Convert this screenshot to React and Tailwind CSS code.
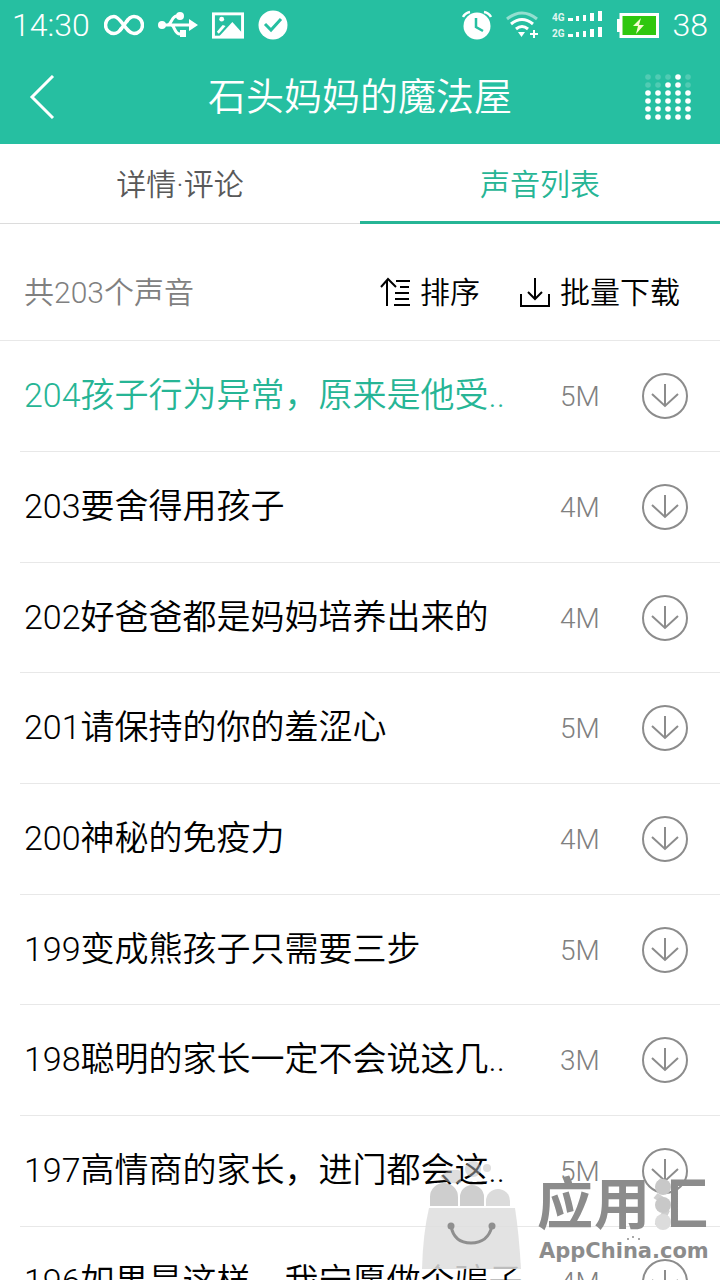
import React, { useState } from 'react';

const sounds = [
  { id: 204, title: '204孩子行为异常，原来是他受..', size: '5M' },
  { id: 203, title: '203要舍得用孩子', size: '4M' },
  { id: 202, title: '202好爸爸都是妈妈培养出来的', size: '4M' },
  { id: 201, title: '201请保持的你的羞涩心', size: '5M' },
  { id: 200, title: '200神秘的免疫力', size: '4M' },
  { id: 199, title: '199变成熊孩子只需要三步', size: '5M' },
  { id: 198, title: '198聪明的家长一定不会说这几..', size: '3M' },
  { id: 197, title: '197高情商的家长，进门都会这..', size: '5M' },
  { id: 196, title: '196如果是这样，我宁愿做个骗子', size: '4M' },
];

// lit dots per column of the "now playing" icon, counted from the bottom
const playingLevels = [4, 4, 5, 6, 4];

const InfinityIcon = () => (
  <svg width="40" height="22" viewBox="0 0 40 22" fill="none" stroke="currentColor" strokeWidth="3.500">
    <path d="M17.500 14C15.500 17.500 13 19.500 10 19.500a8.500 8.500 0 0 1 0-17C17 2.500 22 19.500 30 19.500a8.500 8.500 0 0 0 0-17C27 2.500 24.500 4.500 22.500 8" />
    <path d="M16 16.500L24 5.500" />
  </svg>
);

const UsbIcon = () => (
  <svg width="40" height="26" viewBox="0 0 40 26" fill="none" stroke="currentColor" strokeWidth="3">
    <path d="M4 13h29M9 13c5 0 4-9 10-9h2M13 13c4 0 3 9 9 9h3" />
    <circle cx="4" cy="13" r="4" fill="currentColor" stroke="none" />
    <circle cx="22" cy="4" r="4" fill="currentColor" stroke="none" />
    <path d="M22 18h6v7h-6zM31 7l9 6-9 6z" fill="currentColor" stroke="none" />
  </svg>
);

const PictureIcon = () => (
  <svg width="32" height="27" viewBox="0 0 33 27">
    <rect x="1.500" y="1.500" width="30" height="24" fill="none" stroke="currentColor" strokeWidth="3" />
    <circle cx="10" cy="7" r="2.500" fill="currentColor" />
    <path d="M5 20l6-7 3 1-7 8z" fill="currentColor" />
    <path d="M7 25L21 10l10 11v4z" fill="currentColor" />
  </svg>
);

const CheckBadgeIcon = () => (
  <svg width="30" height="30" viewBox="0 0 30 30">
    <circle cx="15" cy="15" r="14.500" fill="currentColor" />
    <path d="M7 14l6 6 10-11" fill="none" stroke="#26bfa1" strokeWidth="3" />
  </svg>
);

const AlarmIcon = () => (
  <svg width="30" height="30" viewBox="0 0 30 30" fill="none" stroke="currentColor">
    <circle cx="15" cy="16" r="13.500" fill="currentColor" stroke="none" />
    <path d="M1 7q2-4 7-5M29 7q-2-4-7-5" strokeWidth="2.500" />
    <path d="M14 8v9l7 4" stroke="#26bfa1" strokeWidth="2.500" />
  </svg>
);

const WifiIcon = () => (
  <svg width="32" height="28" viewBox="0 0 32 28" fill="none" stroke="currentColor" strokeWidth="3">
    <path d="M1 8Q16-4 31 8" opacity="0.5" />
    <path d="M5 13Q16 4 27 13" />
    <path d="M10 18Q16 13 22 18" />
    <path d="M12 21h7l-3.500 5z" fill="currentColor" stroke="none" />
    <path d="M28 19v8M24 23h8" strokeWidth="2" />
  </svg>
);

const SignalIcon = () => (
  <svg width="51" height="28" viewBox="0 0 51 28" fill="currentColor">
    {[0, 16].map((top) => (
      <g key={top}>
        <text x="0" y={top + 10} fontSize="10" fontWeight="700" opacity="0.85">{top === 0 ? '4G' : '2G'}</text>
        <rect x="16" y={top + 7} width="5" height="3" />
        <rect x="24" y={top + 5} width="3" height="5" />
        <rect x="31" y={top + 4} width="3" height="6" />
        <rect x="38" y={top + 2} width="4" height="8" />
        <rect x="46" y={top} width="4" height="10" />
      </g>
    ))}
  </svg>
);

const BatteryIcon = () => (
  <svg width="42" height="25" viewBox="0 0 42 25">
    <rect x="0" y="6" width="4" height="13" fill="currentColor" />
    <rect x="4" y="1.500" width="36.500" height="22" fill="#2fc70f" stroke="currentColor" strokeWidth="3" />
    <path d="M24 5l-8 8h5l-2 8 8-9h-5z" fill="#f5fbd0" />
  </svg>
);

const PlayingIcon = () => (
  <svg width="48" height="48" viewBox="0 0 48 48" fill="currentColor">
    {playingLevels.map((level, col) =>
      [0, 1, 2, 3, 4, 5].map((row) => (
        <circle
          key={`${col}-${row}`}
          cx={4 + col * 10}
          cy={44 - row * 8}
          r="2.800"
          opacity={row < level ? 1 : 0.2}
        />
      ))
    )}
  </svg>
);

const SortIcon = () => (
  <svg width="30" height="30" viewBox="0 0 30 30" fill="none" stroke="currentColor" strokeWidth="2">
    <path d="M1 10L8 2l8 8M7 3v26M16 4h14M20 10h9M15 16h14M15 22h14M14 28h16" />
  </svg>
);

const BatchDownloadIcon = () => (
  <svg width="30" height="30" viewBox="0 0 30 30" fill="none" stroke="currentColor" strokeWidth="2">
    <path d="M15 1v21M8 15l7 7 7-7M1 17v12h28V17" />
  </svg>
);

const DownloadIcon = () => (
  <svg width="46" height="46" viewBox="0 0 46 46" fill="none" stroke="currentColor" strokeWidth="2">
    <circle cx="23" cy="23" r="22" />
    <path d="M23 11v22M10 21l13 12 13-12" />
  </svg>
);

const StoreMark = () => (
  <svg
    role="img"
    aria-label="应用汇 AppChina.com"
    className="pointer-events-none absolute right-0 bottom-0"
    width="300"
    height="120"
    viewBox="0 0 300 120"
  >
    <defs>
      <linearGradient id="hui">
        <stop offset="0.32" stopColor="#cfcfcf" />
        <stop offset="0.32" stopColor="#8c8c8c" />
      </linearGradient>
    </defs>
    <g fill="#bdbdbd" fillOpacity="0.75">
      <path d="M10 46v-9a14 14 0 0 1 28 0v9zM40 46v-9a12 12 0 0 1 24 0v9z" />
      <path d="M66 46v-5a12 12 0 0 1 24 0v5z" fillOpacity="0.55" />
      <path d="M20 17q10-10 21-6v12q-12 2-21-6z" fillOpacity="0.5" />
      <circle cx="53" cy="9" r="8" fillOpacity="0.5" />
      <circle cx="67" cy="8" r="4" fillOpacity="0.5" />
    </g>
    <path d="M9 48h86q4 26 6 61H2q1-36 7-61z" fill="#dedede" fillOpacity="0.85" />
    <path d="M31 66q3 17 20 17t21-17" fill="none" stroke="#8f8f8f" strokeWidth="3" />
    <circle cx="31" cy="66" r="3.500" fill="#8f8f8f" />
    <circle cx="72" cy="66" r="3.500" fill="#8f8f8f" />
    <g fill="#8c8c8c" fontSize="56" fontWeight="700">
      <text x="117" y="64">应</text>
      <text x="174" y="64">用</text>
      <text x="232" y="64" fill="url(#hui)">汇</text>
      <text x="119" y="98" fontSize="21" fontFamily="'DejaVu Sans', sans-serif">AppChina.com</text>
    </g>
    <g fill="#c8c8c8">
      <circle cx="243" cy="27" r="8" />
      <circle cx="243" cy="45" r="8" />
      <circle cx="243" cy="62" r="8" fill="#dcdcdc" />
    </g>
    <g fill="#8c8c8c">
      <circle cx="208" cy="79" r="1" />
      <circle cx="213" cy="77" r="1" />
      <circle cx="219" cy="79" r="1" />
    </g>
  </svg>
);

const StatusBar = () => (
  <div className="flex h-[50px] items-center justify-between px-3 text-[32px] leading-none">
    <div className="flex items-center gap-3.5">
      <span>14:30</span>
      <InfinityIcon />
      <UsbIcon />
      <PictureIcon />
      <CheckBadgeIcon />
    </div>
    <div className="flex items-center gap-3.5">
      <AlarmIcon />
      <WifiIcon />
      <SignalIcon />
      <BatteryIcon />
      <span>38</span>
    </div>
  </div>
);

const SoundRow = ({ sound, active, onSelect }) => (
  <li className="ml-5 flex h-[111px] shrink-0 items-center border-b border-[#e8e8e8] pr-8 pl-1 nth-[3n]:h-[110px]">
    <button
      className={`min-w-0 flex-1 truncate pb-0.5 text-left text-[34px] leading-[48px] ${active ? 'text-[#26b595]' : 'text-black'}`}
      onClick={() => onSelect(sound.id)}
    >
      {sound.title}
    </button>
    <span className="w-[82px] shrink-0 pt-0.5 text-[28px] text-[#808080]">{sound.size}</span>
    <button className="text-[#8c8c8c]" aria-label={`下载 ${sound.title}`}>
      <DownloadIcon />
    </button>
  </li>
);

const App = () => {
  const [tab, setTab] = useState('list');
  const [current, setCurrent] = useState(204);

  const tabClass = (name) =>
    tab === name
      ? 'border-b-3 border-[#26b595] text-[#26b595]'
      : 'border-b border-[#dcdcdc] text-[#595959]';

  return (
    <div className="relative flex h-screen flex-col overflow-hidden bg-white font-[Roboto,'Noto_Sans_CJK_SC',sans-serif] font-[350]">
      <header className="shrink-0 bg-[#26bfa1] text-white">
        <StatusBar />
        <div className="flex h-[94px] items-center justify-between px-7">
          <button className="w-12" aria-label="返回">
            <svg width="28" height="44" viewBox="0 0 28 44" fill="none" stroke="currentColor" strokeWidth="3">
              <path d="M25 1L4 22l21 21" />
            </svg>
          </button>
          <h1 className="text-[38px]">石头妈妈的魔法屋</h1>
          <button aria-label="正在播放">
            <PlayingIcon />
          </button>
        </div>
      </header>

      <nav className="grid h-20 shrink-0 grid-cols-2 text-[30px]">
        <button className={`pt-0.5 ${tabClass('detail')}`} onClick={() => setTab('detail')}>详情·评论</button>
        <button className={`pt-1 ${tabClass('list')}`} onClick={() => setTab('list')}>声音列表</button>
      </nav>

      <div className="flex h-[117px] shrink-0 items-center border-b border-[#e8e8e8] pt-5 pr-10 pl-6 text-[30px]">
        <span className="flex-1 text-[#808080]">共203个声音</span>
        <button className="mr-10 flex items-center gap-2.5 text-black">
          <SortIcon />
          排序
        </button>
        <button className="flex items-center gap-2.5 text-black">
          <BatchDownloadIcon />
          批量下载
        </button>
      </div>

      <ul className="flex min-h-0 flex-1 flex-col overflow-hidden">
        {sounds.map((sound) => (
          <SoundRow
            key={sound.id}
            sound={sound}
            active={sound.id === current}
            onSelect={setCurrent}
          />
        ))}
      </ul>

      <StoreMark />
    </div>
  );
};

export default App;
